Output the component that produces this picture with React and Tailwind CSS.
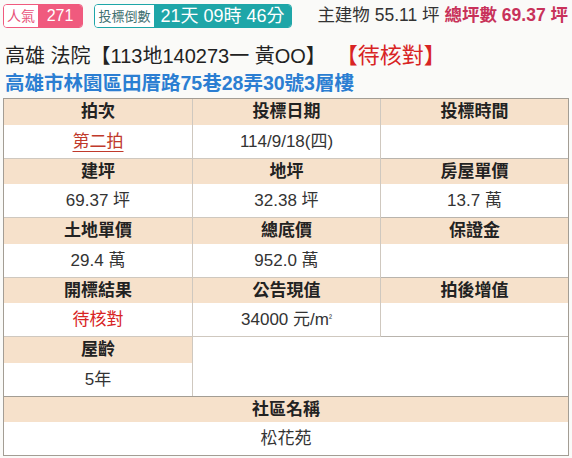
import React from "react";

const FONT = { fontFamily: '"Liberation Sans", "Noto Sans CJK TC", sans-serif' };

function Cell({ label, value, valueClass = "", last = false, bottom = true }) {
  return (
    <div
      className={
        "flex flex-col " +
        (last ? "" : "border-r border-[#cfc8bf] ") +
        (bottom ? "border-b border-[#b9b4ad]" : "")
      }
    >
      <div className="h-[25.5px] bg-[#f6e1cb] flex items-center justify-center text-[17px] font-bold text-[#222] leading-none">
        {label}
      </div>
      <div className={"h-[33px] bg-white flex items-center justify-center text-[17px] text-[#333] leading-none " + valueClass}>
        {value}
      </div>
    </div>
  );
}

export default function App() {
  return (
    <div className="w-[572px] h-[458px] bg-[#fafaf8] overflow-hidden" style={FONT}>
      {/* top row */}
      <div className="flex items-center pt-[4px] pl-[3px] pr-[4px] h-[28px]">
        <div className="flex h-[24px] border border-[#f05a7e] rounded-[4px] overflow-hidden">
          <div className="w-[34px] bg-white flex items-center justify-center text-[14px] text-[#e8527a] leading-none">人氣</div>
          <div className="w-[44px] bg-[#f05a7e] flex items-center justify-center text-[16px] text-white leading-none">271</div>
        </div>
        <div className="flex h-[24px] ml-[11px] border border-[#1ea6a8] rounded-[4px] overflow-hidden">
          <div className="w-[59px] bg-white flex items-center justify-center text-[13px] text-[#3f6f70] leading-none">投標倒數</div>
          <div className="w-[137px] bg-[#1ea6a8] flex items-center justify-center text-[18px] text-white leading-none">21天 09時 46分</div>
        </div>
        <div className="ml-auto text-[17.5px] leading-none whitespace-nowrap">
          <span className="text-[#333]">主建物 55.11 坪 </span>
          <span className="font-bold text-[#c8325a]">總坪數 69.37 坪</span>
        </div>
      </div>

      {/* title */}
      <div className="mt-[14px] pl-[5px] h-[28px] flex items-center text-[20px] leading-[28px] text-[#222] whitespace-nowrap">
        <span>高雄 法院【113地140273一 黃OO】</span>
        <span className="ml-[10px] text-[22px] text-[#d82424]">【待核對】</span>
      </div>
      <div className="pl-[5px] text-[19.5px] leading-[26px] font-bold text-[#2b7ed2] whitespace-nowrap">
        高雄市林園區田厝路75巷28弄30號3層樓
      </div>

      {/* table */}
      <div className="mt-[2px] ml-[3px] w-[566px] border border-[#a39d94] bg-white">
        <div className="grid grid-cols-[189px_188px_187px]">
          <Cell label="拍次" value={<span className="text-[#c0392b] underline underline-offset-4 decoration-[#c0392b]">第二拍</span>} />
          <Cell label="投標日期" value="114/9/18(四)" />
          <Cell label="投標時間" value="" last />

          <Cell label="建坪" value="69.37 坪" />
          <Cell label="地坪" value="32.38 坪" />
          <Cell label="房屋單價" value="13.7 萬" last />

          <Cell label="土地單價" value="29.4 萬" />
          <Cell label="總底價" value="952.0 萬" />
          <Cell label="保證金" value="" last />

          <Cell label="開標結果" value={<span className="text-[#d82424]">待核對</span>} />
          <Cell label="公告現值" value={<span>34000 元/m<sup className="text-[9px]">²</sup></span>} />
          <Cell label="拍後增值" value="" last />

          <Cell label="屋齡" value="5年" bottom={false} />
          <div className="col-span-2 bg-white"></div>
        </div>
        <div className="border-t border-[#a39d94]">
          <div className="h-[25.5px] bg-[#f6e1cb] flex items-center justify-center text-[17px] font-bold text-[#222] leading-none">社區名稱</div>
          <div className="h-[33px] bg-white flex items-center justify-center text-[17px] text-[#333] leading-none">松花苑</div>
        </div>
      </div>
    </div>
  );
}
